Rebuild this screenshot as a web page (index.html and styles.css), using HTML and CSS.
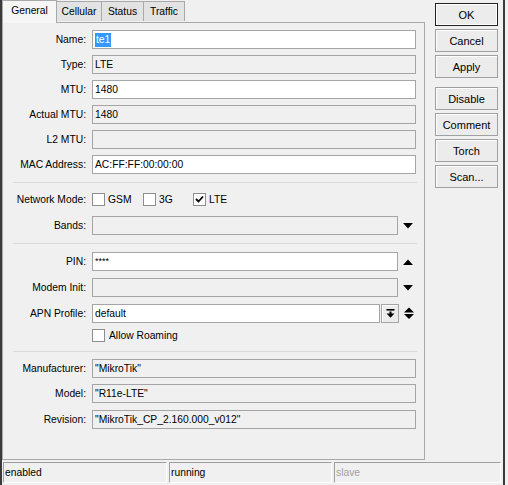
FILE: index.html
```html
<!DOCTYPE html>
<html>
<head>
<meta charset="utf-8">
<link rel="stylesheet" href="styles.css">
</head>
<body>
<div class="window">
  <div class="main">
    <div class="left">
      <div class="tabs">
        <div class="tab sel">General</div>
        <div class="tab t-cell">Cellular</div>
        <div class="tab t-status">Status</div>
        <div class="tab t-traffic">Traffic</div>
      </div>
      <div class="panel">
        <div class="sec sec1">
          <div class="row"><div class="lbl">Name:</div><div class="fld full edit"><span class="hl">te1</span></div></div>
          <div class="row"><div class="lbl">Type:</div><div class="fld full">LTE</div></div>
          <div class="row"><div class="lbl">MTU:</div><div class="fld full edit">1480</div></div>
          <div class="row"><div class="lbl">Actual MTU:</div><div class="fld full">1480</div></div>
          <div class="row"><div class="lbl">L2 MTU:</div><div class="fld full"></div></div>
          <div class="row"><div class="lbl">MAC Address:</div><div class="fld full edit">AC:FF:FF:00:00:00</div></div>
        </div>
        <div class="sep sep1"></div>
        <div class="row netrow">
          <div class="lbl">Network Mode:</div>
          <div class="chk w51"><span class="box"></span><span>GSM</span></div>
          <div class="chk w50"><span class="box"></span><span>3G</span></div>
          <div class="chk"><span class="box"><svg width="11" height="11" viewBox="0 0 11 11"><path d="M2 5 L4.5 7.5 L9 2.5" fill="none" stroke="#000" stroke-width="1.8"/></svg></span><span>LTE</span></div>
        </div>
        <div class="row bands">
          <div class="lbl">Bands:</div><div class="fld short"></div>
          <div class="arr"><svg width="10" height="6" viewBox="0 0 10 6"><path d="M0 0 H10 L5 5.5 Z" fill="#000"/></svg></div>
        </div>
        <div class="sep sep2"></div>
        <div class="row pin">
          <div class="lbl">PIN:</div><div class="fld short edit pintext">****</div>
          <div class="arr"><svg width="10" height="6" viewBox="0 0 10 6"><path d="M0 6 H10 L5 0.5 Z" fill="#000"/></svg></div>
        </div>
        <div class="row gap7">
          <div class="lbl">Modem Init:</div><div class="fld short"></div>
          <div class="arr"><svg width="10" height="6" viewBox="0 0 10 6"><path d="M0 0 H10 L5 5.5 Z" fill="#000"/></svg></div>
        </div>
        <div class="row gap7">
          <div class="lbl">APN Profile:</div><div class="fld apn edit">default</div>
          <div class="sbtn"><svg width="9" height="10" viewBox="0 0 9 10"><rect x="0.5" y="0" width="8" height="1.6" fill="#000"/><rect x="3.5" y="2.5" width="2" height="2.5" fill="#000"/><path d="M0.5 4.5 H8.5 L4.5 8.7 Z" fill="#000"/></svg></div>
          <div class="arr ud"><svg width="10" height="13" viewBox="0 0 10 13"><path d="M0 5.5 H10 L5 0.5 Z" fill="#000"/><path d="M0 7 H10 L5 12 Z" fill="#000"/></svg></div>
        </div>
        <div class="row roam">
          <div class="lbl"></div>
          <div class="chk"><span class="box"></span><span class="rt">Allow Roaming</span></div>
        </div>
        <div class="sep sep3"></div>
        <div class="row m7">
          <div class="lbl">Manufacturer:</div><div class="fld full">"MikroTik"</div>
        </div>
        <div class="row m6">
          <div class="lbl">Model:</div><div class="fld full">"R11e-LTE"</div>
        </div>
        <div class="row gap7">
          <div class="lbl">Revision:</div><div class="fld full">"MikroTik_CP_2.160.000_v012"</div>
        </div>
      </div>
    </div>
    <div class="buttons">
      <div class="btn def">OK</div>
      <div class="btn">Cancel</div>
      <div class="btn">Apply</div>
      <div class="btn gapbig">Disable</div>
      <div class="btn">Comment</div>
      <div class="btn">Torch</div>
      <div class="btn">Scan...</div>
    </div>
  </div>
  <div class="status">
    <div class="cell c1">enabled</div>
    <div class="cell c2">running</div>
    <div class="cell c3 dis">slave</div>
  </div>
</div>
</body>
</html>
```

FILE: styles.css
```css
html, body {
  margin: 0;
  padding: 0;
  background: #f0f0f0;
}
body {
  width: 508px;
  height: 485px;
  overflow: hidden;
  font-family: "Liberation Sans", Arial, sans-serif;
  font-size: 10.3px;
  color: #000;
}
.window {
  width: 505px;
  height: 485px;
  box-sizing: border-box;
  border-left: 2px solid #3a3a3a;
  border-right: 2px solid #3a3a3a;
  display: flex;
  flex-direction: column;
}
.main {
  display: flex;
  height: 460px;
}
.left {
  width: 423px;
  display: flex;
  flex-direction: column;
}
.tabs {
  display: flex;
  height: 22px;
  align-items: flex-end;
}
.tab {
  box-sizing: border-box;
  height: 20px;
  border: 1px solid #a9a9a9;
  border-bottom: none;
  background: #e3e3e3;
  display: flex;
  align-items: center;
  justify-content: center;
  margin-left: -1px;
  margin-bottom: 1px;
}
.tab.sel {
  margin-left: 0;
  width: 55px;
  height: 23px;
  margin-bottom: -1px;
  background: #f6f6f6;
  position: relative;
  z-index: 2;
  padding-bottom: 3px;
}
.t-cell { width: 46px; }
.t-status { width: 43px; }
.t-traffic { width: 42px; }
.panel {
  box-sizing: border-box;
  height: 439px;
  border: 1px solid #a9a9a9;
  padding-top: 7px;
  display: flex;
  flex-direction: column;
}
.sec1 {
  display: flex;
  flex-direction: column;
  gap: 6px;
}
.row {
  display: flex;
  align-items: center;
  height: 19px;
}
.lbl {
  width: 83px;
  margin-right: 6px;
  text-align: right;
  white-space: nowrap;
}
.fld {
  box-sizing: border-box;
  height: 19px;
  border: 1px solid #a5a5a5;
  background: #f0f0f0;
  padding-left: 2px;
  line-height: 17px;
  white-space: nowrap;
  overflow: hidden;
}
.fld.edit { background: #fff; }
.full { width: 324px; }
.short { width: 306px; }
.apn { width: 288px; }
.hl {
  background: #3399ff;
  color: #fff;
  padding: 0 1px;
  display: inline-block;
  line-height: 14px;
}
.pintext { font-size: 9px; letter-spacing: 0; }
.sep {
  height: 1px;
  background: #dadada;
  margin-left: 10px;
  width: 404px;
}
.sep1 { margin-top: 8px; }
.netrow { margin-top: 6px; height: 20px; }
.bands { margin-top: 7px; }
.sep2 { margin-top: 8px; }
.pin { margin-top: 8px; }
.gap7 { margin-top: 7px; }
.m7 { margin-top: 7px; }
.m6 { margin-top: 6px; }
.roam { margin-top: 3px; }
.sep3 { margin-top: 6px; }
.chk {
  display: flex;
  align-items: center;
}
.w51 { width: 51px; }
.w50 { width: 50px; }
.box {
  box-sizing: border-box;
  width: 13px;
  height: 13px;
  border: 1px solid #8e8e8e;
  background: #fff;
  margin-right: 3px;
  display: flex;
  align-items: center;
  justify-content: center;
}
.rt { margin-left: 1px; }
.arr {
  width: 18px;
  height: 19px;
  display: flex;
  align-items: center;
  justify-content: center;
  margin-left: 1px;
}
.sbtn {
  box-sizing: border-box;
  width: 18px;
  height: 19px;
  margin-left: 1px;
  border: 1px solid #a5a5a5;
  box-shadow: inset 1px 1px 0 #fff;
  background: #ececec;
  display: flex;
  align-items: center;
  justify-content: center;
}
.ud { margin-left: 1px; }
.buttons {
  width: 63px;
  margin-left: 10px;
  padding-top: 3px;
  display: flex;
  flex-direction: column;
  gap: 3px;
}
.btn {
  box-sizing: border-box;
  height: 23px;
  border: 1px solid #a0a0a0;
  box-shadow: inset 1px 1px 0 #fff;
  background: #ececec;
  display: flex;
  align-items: center;
  justify-content: center;
  font-size: 11px;
}
.btn.def {
  border: 1px solid #222;
  box-shadow: inset 0 0 0 1px #fff;
}
.gapbig { margin-top: 6px; }
.status {
  display: flex;
  margin-top: 2px;
  height: 21px;
  gap: 2px;
  padding-left: 1px;
}
.cell {
  box-sizing: border-box;
  height: 21px;
  border-top: 1px solid #a0a0a0;
  border-left: 1px solid #a0a0a0;
  border-right: 1px solid #fff;
  border-bottom: 1px solid #fff;
  padding-left: 1px;
  line-height: 19px;
}
.c1 { width: 164px; }
.c2 { width: 163px; }
.c3 { width: 167px; }
.dis { color: #a0a0a0; }
```
